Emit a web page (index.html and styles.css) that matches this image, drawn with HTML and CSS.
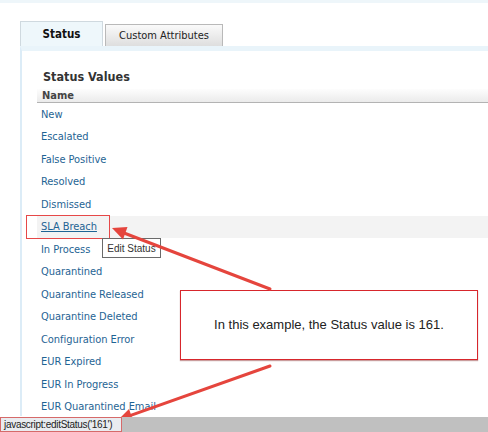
FILE: index.html
```html
<!DOCTYPE html>
<html>
<head>
<meta charset="utf-8">
<link rel="stylesheet" href="styles.css">
</head>
<body>
<div class="page">
  <div class="topline"></div>
  <div class="tabs">
    <div class="tab active">Status</div>
    <div class="tab">Custom Attributes</div>
  </div>
  <div class="panel">
    <div class="section-title">Status Values</div>
    <div class="table">
      <div class="thead">Name</div>
      <div class="row"><a>New</a></div>
      <div class="row"><a>Escalated</a></div>
      <div class="row"><a>False Positive</a></div>
      <div class="row"><a>Resolved</a></div>
      <div class="row"><a>Dismissed</a></div>
      <div class="row hover"><a class="u">SLA Breach</a></div>
      <div class="row"><a>In Process</a></div>
      <div class="row"><a>Quarantined</a></div>
      <div class="row"><a>Quarantine Released</a></div>
      <div class="row"><a>Quarantine Deleted</a></div>
      <div class="row"><a>Configuration Error</a></div>
      <div class="row"><a>EUR Expired</a></div>
      <div class="row"><a>EUR In Progress</a></div>
      <div class="row"><a>EUR Quarantined Email</a></div>
    </div>
  </div>

  <div class="highlight"></div>
  <div class="tooltip">Edit Status</div>
  <div class="callout">In this example, the Status value is 161.</div>
  <svg class="arrows" width="488" height="432" viewBox="0 0 488 432">
    <line x1="270" y1="289" x2="124" y2="233" stroke="#e5453d" stroke-width="3" stroke-linecap="round"/>
    <polygon points="112,228 127.5,227 123,239.5" fill="#e5453d"/>
    <line x1="270" y1="366" x2="130" y2="415.6" stroke="#e5453d" stroke-width="3" stroke-linecap="round"/>
    <polygon points="118,420 133.5,421.5 129,409" fill="#e5453d"/>
  </svg>
  <div class="statusbar"><span class="url">javascript:editStatus('161')</span></div>
</div>
</body>
</html>
```
FILE: styles.css
```css
html, body {
  margin: 0;
  padding: 0;
  background: #fff;
}
.page {
  position: relative;
  width: 488px;
  height: 432px;
  overflow: hidden;
  font-family: "DejaVu Sans Condensed", "DejaVu Sans", sans-serif;
}
.topline {
  height: 3px;
  background: #eef6fa;
}
.tabs {
  display: flex;
  align-items: flex-end;
  padding-left: 20px;
  margin-top: 18px;
  gap: 2px;
}
.tab {
  box-sizing: border-box;
  width: 118px;
  height: 22px;
  border: 1px solid #b9b9b9;
  border-bottom: none;
  background: linear-gradient(#fafafa, #dedede);
  font-size: 11px;
  color: #222;
  display: flex;
  align-items: center;
  justify-content: center;
}
.tab.active {
  width: 83px;
  height: 25px;
  border-color: #cfd9df;
  background: #eef7fb;
  font-weight: bold;
  font-size: 11.5px;
  color: #111;
}
.panel {
  margin-left: 20px;
  border-left: 2px solid #dcecf7;
  border-top: 5px solid #e9f4fa;
  height: 365px;
  padding-left: 15px;
}
.section-title {
  font-weight: bold;
  font-size: 12.5px;
  color: #333;
  padding: 18px 0 0 6px;
  height: 15px;
}
.table {
  margin-top: 5px;
}
.thead {
  box-sizing: border-box;
  height: 14px;
  font-size: 11px;
  font-weight: bold;
  color: #444;
  padding-left: 5px;
  line-height: 13px;
  background: linear-gradient(#fdfdfd, #ebebeb);
  border-bottom: 1px solid #b3b3b3;
}
.row {
  height: 22.5px;
  display: flex;
  align-items: center;
  padding-left: 4px;
  font-size: 11px;
}
.row a {
  color: #1f6494;
  letter-spacing: -0.05px;
}
.row a.u {
  text-decoration: underline;
}
.row.hover {
  background: #f3f3f3;
}
.highlight {
  position: absolute;
  left: 26px;
  top: 215px;
  width: 82px;
  height: 22px;
  border: 1px solid #e64848;
}
.tooltip {
  position: absolute;
  left: 102px;
  top: 238px;
  box-sizing: border-box;
  width: 59px;
  height: 20px;
  border: 1px solid #6a6a6a;
  background: #fff;
  font-family: "Liberation Sans", sans-serif;
  font-size: 10px;
  color: #333;
  display: flex;
  align-items: center;
  justify-content: center;
}
.callout {
  position: absolute;
  left: 180px;
  top: 290px;
  box-sizing: border-box;
  width: 298px;
  height: 70px;
  border: 1px solid #d7262c;
  background: #fff;
  box-shadow: 0 1px 1px rgba(150, 60, 60, 0.5);
  font-family: "Liberation Sans", Arial, sans-serif;
  font-size: 13px;
  color: #222;
  display: flex;
  align-items: center;
  justify-content: center;
  padding-bottom: 2px;
}
.arrows {
  position: absolute;
  left: 0;
  top: 0;
}
.statusbar {
  position: absolute;
  left: 0;
  bottom: 0;
  width: 488px;
  height: 15px;
  background: #c0c0c0;
  display: flex;
}
.url {
  box-sizing: border-box;
  width: 122px;
  height: 15px;
  background: #e9ecf0;
  border: 1px solid #d66a6a;
  font-family: "Liberation Sans", sans-serif;
  font-size: 10px;
  letter-spacing: -0.3px;
  color: #222;
  line-height: 13px;
  padding-left: 3px;
  white-space: nowrap;
}
```
